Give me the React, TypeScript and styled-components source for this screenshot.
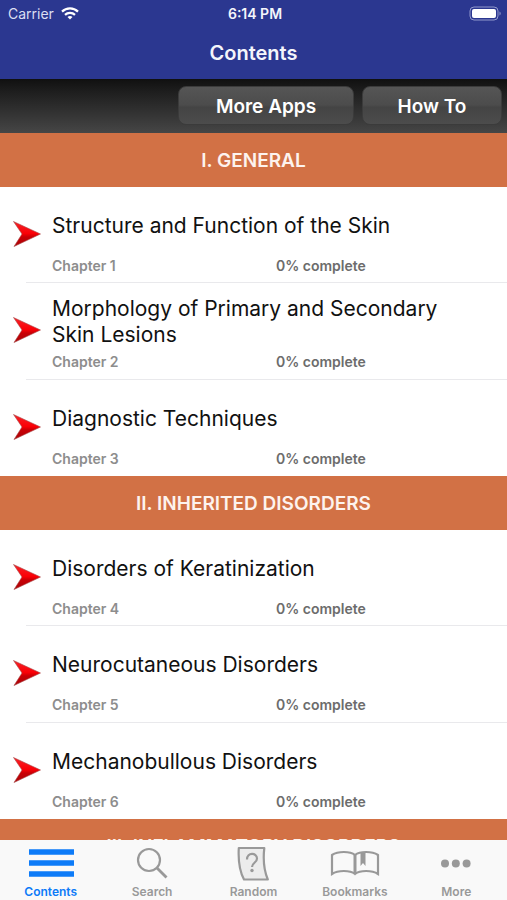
import React from "react";
import styled, { createGlobalStyle, css } from "styled-components";

const GlobalStyle = createGlobalStyle`
  *, *::before, *::after { box-sizing: border-box; }
  body {
    margin: 0;
    background: #fff;
    font-family: Inter, "Liberation Sans", sans-serif;
  }
`;

const Page = styled.div`
  display: flex;
  flex-direction: column;
  height: 100vh;
  overflow: hidden;
`;

const Header = styled.header`
  flex: none;
  background: #2b3790;
  color: #f4f5fb;
`;

const StatusBar = styled.div`
  display: grid;
  grid-template-columns: 1fr auto 1fr;
  align-items: center;
  height: 27px;
  padding: 0 5px 0 8px;
  font-size: 14px;
  line-height: 18px;
`;

const Carrier = styled.span`
  display: flex;
  align-items: center;
  gap: 7px;
  color: #dcdff2;
`;

const Clock = styled.time`
  font-weight: 600;
`;

const Battery = styled.span`
  display: flex;
  justify-content: flex-end;
`;

const Title = styled.h1`
  margin: 0;
  height: 52px;
  font-size: 20px;
  line-height: 52px;
  font-weight: 600;
  text-align: center;
`;

const Toolbar = styled.div`
  flex: none;
  display: flex;
  justify-content: flex-end;
  gap: 8px;
  height: 54px;
  padding: 7px 5px 8px;
  background: linear-gradient(#101010, #1c1c1c 20%, #464646);
`;

const ToolButton = styled.button<{ $width: number }>`
  width: ${(p) => p.$width}px;
  padding: 2px 0 0;
  border: 1px solid #3b3b3b;
  border-radius: 8px;
  background: linear-gradient(#555, #4c4c4c 48%, #444 55%, #4c4c4c);
  color: #fff;
  font: inherit;
  font-size: 19px;
  font-weight: 600;
`;

const Main = styled.main`
  flex: 1;
  min-height: 0;
  overflow-y: auto;
  scrollbar-width: none;
`;

const SectionTitle = styled.h2`
  margin: 0;
  height: 54px;
  background: #d27145;
  color: #fdf3ee;
  font-size: 19px;
  line-height: 56px;
  font-weight: 600;
  text-align: center;
`;

const ChapterList = styled.ul`
  margin: 0;
  padding: 0;
  list-style: none;
`;

const ChapterRow = styled.li`
  display: grid;
  grid-template-columns: 52px 1fr;
  min-height: 96px;
  padding: 13px 36px 8px 0;
  background:
    linear-gradient(#e9e9ec, #e9e9ec) 26px 100% / 100% 1px no-repeat,
    #fff;

  &:nth-child(2) {
    min-height: 97px;
  }

  &:last-child {
    background: #fff;
  }
`;

const Marker = styled.span`
  padding: 20px 0 0 12px;

  svg {
    display: block;
  }
`;

const ChapterTitle = styled.h3`
  display: flex;
  align-items: center;
  margin: 0;
  height: 52px;
  color: #111;
  font-size: 21px;
  line-height: 26px;
  font-weight: 400;
`;

const Meta = styled.div`
  display: grid;
  grid-template-columns: 224px 1fr;
  padding-top: 5px;
  font-size: 14px;
  line-height: 18px;
  font-weight: 600;
  color: #8d8d8d;
`;

const Progress = styled.span`
  color: #6c6c6c;
`;

const TabBar = styled.nav`
  flex: none;
  display: grid;
  grid-template-columns: repeat(5, 1fr);
  height: 60px;
  background: #f9f9f9;
`;

const Tab = styled.button<{ $active?: boolean }>`
  display: flex;
  flex-direction: column;
  align-items: center;
  padding: 4px 0 0;
  border: 0;
  background: none;
  color: #999;
  font: inherit;
  font-size: 12px;
  line-height: 16px;
  font-weight: 600;

  svg {
    display: block;
    margin-bottom: 2px;
  }

  ${(p) =>
    p.$active &&
    css`
      color: #0d7bf8;
    `}
`;

const WifiIcon = () => (
  <svg width="18" height="13" viewBox="0 0 18 13" fill="none" stroke="#fff" strokeWidth="2.2" aria-hidden="true">
    <path d="M1 4.6C5.4.3 12.6.3 17 4.6" />
    <path d="M4 7.9c2.8-2.7 7.2-2.7 10 0" />
    <path d="M6.5 9.9c1.5-1.2 3.5-1.2 5 0L9 12.6z" fill="#fff" stroke="none" />
  </svg>
);

const BatteryIcon = () => (
  <svg width="33" height="15" viewBox="0 0 33 15" aria-hidden="true">
    <rect x="1" y="1" width="28" height="13" rx="4" fill="none" stroke="#9299cc" />
    <rect x="3" y="3" width="24" height="9" rx="2" fill="#fff" />
    <path d="M30.5 5.5c1.6.6 1.6 3.4 0 4z" fill="#9299cc" />
  </svg>
);

const Arrow = () => (
  <svg width="30" height="28" viewBox="0 0 30 28" aria-hidden="true">
    <defs>
      <linearGradient id="arrow-red" x1="0" y1="0" x2="0" y2="1">
        <stop offset="0" stopColor="#f5252a" />
        <stop offset=".48" stopColor="#fa0006" />
        <stop offset=".62" stopColor="#c90005" />
        <stop offset="1" stopColor="#a80408" />
      </linearGradient>
    </defs>
    <path d="M1.500 1.500 28.500 14 2 26.500 10 14z" fill="url(#arrow-red)" stroke="#a84a4a" strokeWidth=".6" />
  </svg>
);

const iconProps = {
  width: 52,
  height: 38,
  viewBox: "0 0 52 38",
  fill: "none",
  stroke: "currentColor",
  strokeWidth: 2,
  "aria-hidden": true,
};

const ContentsIcon = () => (
  <svg {...iconProps}>
    <path d="M4 8h45M4 19h45M4 30h45" strokeWidth="5.6" />
  </svg>
);

const SearchIcon = () => (
  <svg {...iconProps}>
    <circle cx="23" cy="16" r="11" strokeWidth="2.2" />
    <path d="m31 24 9.500 9.500" strokeWidth="2.800" />
  </svg>
);

const RandomIcon = () => (
  <svg {...iconProps} strokeWidth={2.2} strokeLinejoin="round">
    <path d="M11.800 4h25.500c-1.500 13 0 23 3.500 31.500H17C13.500 29 11 18 11.800 4z" fill="#ececec" />
    <path d="M20 15.500c0-7.500 10-7 10-1 0 4.500-5 4-5 8.500" />
    <circle cx="25" cy="26.500" r="1.700" fill="currentColor" stroke="none" />
  </svg>
);

const BookmarksIcon = () => (
  <svg {...iconProps} strokeWidth={2.2}>
    <path d="M26 11C21 7 9 7 3 11v19c6-4 18-4 23 0 5-4 17-4 23 0V11c-6-4-18-4-23 0z" />
    <path d="M26 11v19" strokeWidth="3" />
    <path d="M31.500 8.500h5V22L34 19l-2.500 3z" fill="currentColor" stroke="none" />
  </svg>
);

const MoreIcon = () => (
  <svg {...iconProps} fill="currentColor" stroke="none">
    <circle cx="15" cy="19.500" r="4" />
    <circle cx="25.800" cy="19.500" r="4" />
    <circle cx="36.600" cy="19.500" r="4" />
  </svg>
);

const sections = [
  {
    title: "I. GENERAL",
    first: 1,
    chapters: [
      "Structure and Function of the Skin",
      "Morphology of Primary and Secondary Skin Lesions",
      "Diagnostic Techniques",
    ],
  },
  {
    title: "II. INHERITED DISORDERS",
    first: 4,
    chapters: ["Disorders of Keratinization", "Neurocutaneous Disorders", "Mechanobullous Disorders"],
  },
  { title: "III. INFLAMMATORY DISORDERS", first: 7, chapters: [] },
];

const tabs = [
  { label: "Contents", Icon: ContentsIcon },
  { label: "Search", Icon: SearchIcon },
  { label: "Random", Icon: RandomIcon },
  { label: "Bookmarks", Icon: BookmarksIcon },
  { label: "More", Icon: MoreIcon },
];

export default function App() {
  const [active, setActive] = React.useState("Contents");
  return (
    <Page>
      <GlobalStyle />
      <Header>
        <StatusBar>
          <Carrier>
            Carrier <WifiIcon />
          </Carrier>
          <Clock>6:14 PM</Clock>
          <Battery>
            <BatteryIcon />
          </Battery>
        </StatusBar>
        <Title>Contents</Title>
      </Header>
      <Toolbar>
        <ToolButton $width={176}>More Apps</ToolButton>
        <ToolButton $width={140}>How To</ToolButton>
      </Toolbar>
      <Main>
        {sections.map((section) => (
          <section key={section.title}>
            <SectionTitle>{section.title}</SectionTitle>
            {section.chapters.length > 0 && (
              <ChapterList>
                {section.chapters.map((chapter, i) => (
                  <ChapterRow key={chapter}>
                    <Marker>
                      <Arrow />
                    </Marker>
                    <div>
                      <ChapterTitle>{chapter}</ChapterTitle>
                      <Meta>
                        <span>Chapter {section.first + i}</span>
                        <Progress>0% complete</Progress>
                      </Meta>
                    </div>
                  </ChapterRow>
                ))}
              </ChapterList>
            )}
          </section>
        ))}
      </Main>
      <TabBar>
        {tabs.map(({ label, Icon }) => (
          <Tab key={label} $active={label === active} onClick={() => setActive(label)}>
            <Icon />
            {label}
          </Tab>
        ))}
      </TabBar>
    </Page>
  );
}
